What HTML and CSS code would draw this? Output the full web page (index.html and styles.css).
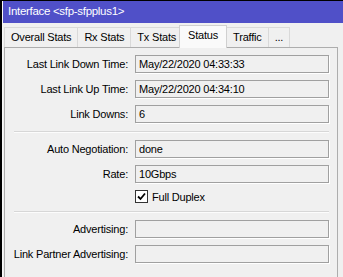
FILE: index.html
```html
<!DOCTYPE html>
<html lang="en">
<head>
    <meta charset="UTF-8">
    <title>Interface &lt;sfp-sfpplus1&gt;</title>
    <link rel="stylesheet" href="styles.css">
</head>
<body>

    <div class="window">
        <div class="titlebar">Interface &lt;sfp-sfpplus1&gt;</div>

        <div class="tabs">
            <div class="tab">Overall Stats</div>
            <div class="tab">Rx Stats</div>
            <div class="tab">Tx Stats</div>
            <div class="tab active">Status</div>
            <div class="tab">Traffic</div>
            <div class="tab">...</div>
        </div>

        <div class="panel">
            <div class="section">
                <label>Last Link Down Time:</label>
                <div class="field">May/22/2020 04:33:33</div>
                <label>Last Link Up Time:</label>
                <div class="field">May/22/2020 04:34:10</div>
                <label>Link Downs:</label>
                <div class="field">6</div>
            </div>

            <div class="separator"></div>

            <div class="section">
                <label>Auto Negotiation:</label>
                <div class="field">done</div>
                <label>Rate:</label>
                <div class="field">10Gbps</div>
                <span></span>
                <div class="check">
                    <span class="box">
                        <svg width="9" height="9" viewBox="0 0 9 9"><path d="M1 4.5 L3.5 7 L8 1.5" fill="none" stroke="#000" stroke-width="1.8"/></svg>
                    </span>
                    Full Duplex
                </div>
            </div>

            <div class="separator"></div>

            <div class="section">
                <label>Advertising:</label>
                <div class="field"></div>
                <label>Link Partner Advertising:</label>
                <div class="field"></div>
            </div>
        </div>
    </div>

</body>
</html>
```

FILE: styles.css
```css
html {
    overflow: hidden;
}

body {
    margin: 0;
    padding: 1px 0 0 2px;
    background: #000;
    font-family: "Liberation Sans", Arial, sans-serif;
    font-size: 11px;
    letter-spacing: -0.2px;
    color: #000;
    height: 277px;
    box-sizing: border-box;
    overflow: hidden;
}

.window {
    background: #f0f0f0;
    border-left: 1px solid #f8f8f8;
    height: 100%;
    display: flex;
    flex-direction: column;
}

.titlebar {
    background: #5050c8;
    color: #fff;
    height: 22px;
    line-height: 21px;
    padding-left: 5px;
    font-size: 11.5px;
    letter-spacing: -0.3px;
}

/* Tabs */
.tabs {
    display: flex;
    align-items: flex-end;
    height: 24px;
    margin-left: 1px;
    position: relative;
    z-index: 1;
}

.tab {
    height: 20px;
    line-height: 19px;
    padding: 0 6px;
    border: 1px solid #d9d9d9;
    border-bottom: none;
    box-sizing: border-box;
    background: #f0f0f0;
    margin-right: -1px;
}

.tab.active {
    height: 23px;
    background: #fafafa;
    margin: 0 -2px -1px -3px;
    padding: 0 8px;
    border-color: #d0d0d0;
    position: relative;
    z-index: 2;
}

.tab.active + .tab {
    margin-left: 1px;
}

/* Panel */
.panel {
    flex: 1;
    margin: 0 5px 0 1px;
    border: 1px solid #adadad;
    border-bottom: none;
    padding: 7px 8px 0 0;
}

.section {
    display: grid;
    grid-template-columns: 123px 194px;
    column-gap: 7px;
    row-gap: 7px;
}

label {
    text-align: right;
    line-height: 18px;
}

.field {
    height: 18px;
    line-height: 16px;
    box-sizing: border-box;
    border: 1px solid #a0a0a0;
    box-shadow: 1px 1px 0 #fff;
    padding-left: 3px;
}

.separator {
    height: 1px;
    background: #d7d7d7;
    border-bottom: 1px solid #fcfcfc;
    margin: 8px 0 7px 9px;
}

.check {
    display: flex;
    align-items: center;
    height: 13px;
    gap: 4px;
}

.box {
    width: 11px;
    height: 11px;
    border: 1px solid #333;
    background: #fff;
    display: flex;
    align-items: center;
    justify-content: center;
}
```
